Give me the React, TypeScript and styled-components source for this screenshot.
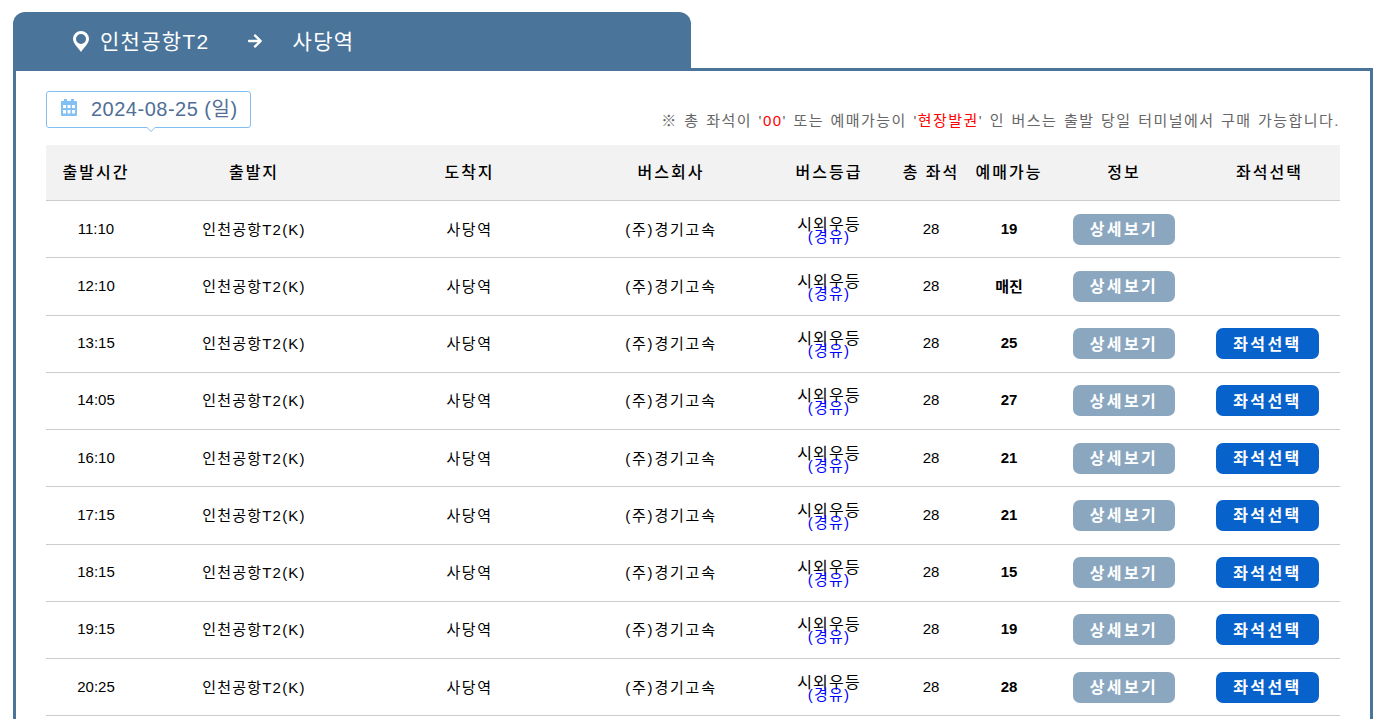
import styled, { createGlobalStyle } from "styled-components"
import { FaArrowRight } from "react-icons/fa"

const GlobalStyle = createGlobalStyle`
    html, body {
        margin: 0;
        padding: 0;
        height: 719px;
        overflow: hidden;
        background: #fff;
    }
    body {
        font-family: "Liberation Sans", "Noto Sans CJK KR", sans-serif;
        color: #000;
    }
`

const Page = styled.div`
    padding: 12px 14px 0 13px;
`

const RouteTab = styled.div`
    display: flex;
    align-items: center;
    width: 678px;
    height: 56px;
    box-sizing: border-box;
    padding: 2px 0 0 60px;
    background: #4b749a;
    border-radius: 12px 12px 0 0;
    color: #fff;
    font-size: 21px;
    svg {
        flex: none;
    }
`

const PlaceName = styled.span`
    margin: -2px 0 0 11px;
    letter-spacing: 1.3px;
`

const Arrow = styled(FaArrowRight)`
    margin: 0 19px 0 37px;
    font-size: 16px;
`

const Frame = styled.div`
    border: 3px solid #4b749a;
    padding: 20px 30px 40px 30px;
    background: #fff;
`

const TopRow = styled.div`
    display: flex;
    justify-content: space-between;
    align-items: flex-end;
    height: 54px;
`

const DateBox = styled.div`
    position: relative;
    display: flex;
    align-items: center;
    align-self: flex-start;
    width: 205px;
    height: 37px;
    box-sizing: border-box;
    padding: 0 0 5px 14px;
    border: 1px solid #82bff5;
    border-radius: 3px;
    color: #4f6f96;
    font-size: 20px;
    letter-spacing: 0.5px;
    &::before, &::after {
        content: "";
        position: absolute;
        left: 99px;
        border-left: 5px solid transparent;
        border-right: 5px solid transparent;
    }
    &::before {
        bottom: -5px;
        border-top: 5px solid #82bff5;
    }
    &::after {
        bottom: -4px;
        border-top: 5px solid #fff;
    }
`

const CalendarIcon = styled.svg`
    flex: none;
    width: 16px;
    height: 17px;
    margin-right: 14px;
    fill: #82bff5;
`

const Notice = styled.p`
    margin: 0 0 14px 0;
    font-size: 15px;
    line-height: 20px;
    letter-spacing: 1.45px;
    word-spacing: 1px;
    color: #666;
    white-space: nowrap;
`

const Red = styled.span`
    color: #f00;
`

const BusTable = styled.table`
    width: 1294px;
    border-collapse: separate;
    border-spacing: 0;
    table-layout: fixed;
`

const HeadCell = styled.th`
    height: 52px;
    padding: 0 0 3px 0;
    background: #f2f2f2;
    border-bottom: 1px solid #ccc;
    font-size: 16px;
    font-weight: 500;
    letter-spacing: 2px;
    text-align: center;
`

const Cell = styled.td<{ $strong?: boolean; $spacing?: number }>`
    height: 54.25px;
    padding: 0 0 2px 0;
    border-bottom: 1px solid #ccc;
    font-size: 15px;
    font-weight: ${(p) => (p.$strong ? 700 : 400)};
    letter-spacing: ${(p) => p.$spacing ?? 0}px;
    text-align: center;
`

const Grade = styled.div`
    margin-top: 4px;
    font-size: 16px;
    line-height: 16px;
    letter-spacing: 1.2px;
`

const Fuel = styled.div`
    font-size: 15px;
    line-height: 14px;
    margin-top: -3px;
    letter-spacing: 1.2px;
    color: #00f;
`

const ActionButton = styled.button<{ $primary?: boolean }>`
    width: ${(p) => (p.$primary ? "103px" : "102px")};
    height: 31px;
    margin: 2px ${(p) => (p.$primary ? "4px" : "0")} 0 0;
    padding: 0 0 2px 0;
    border: none;
    border-radius: 7px;
    background: ${(p) => (p.$primary ? "#0862cb" : "#8ba7bf")};
    color: #fff;
    font-family: inherit;
    font-size: 16px;
    font-weight: 700;
    letter-spacing: 2.4px;
    vertical-align: middle;
`

const columns = [100, 216, 215, 188, 128, 76, 80, 150, 141]
const headers = ["출발시간", "출발지", "도착지", "버스회사", "버스등급", "총 좌석", "예매가능", "정보", "좌석선택"]

const buses = [
    { time: "11:10", left: "19", canSelect: false },
    { time: "12:10", left: "매진", canSelect: false },
    { time: "13:15", left: "25", canSelect: true },
    { time: "14:05", left: "27", canSelect: true },
    { time: "16:10", left: "21", canSelect: true },
    { time: "17:15", left: "21", canSelect: true },
    { time: "18:15", left: "15", canSelect: true },
    { time: "19:15", left: "19", canSelect: true },
    { time: "20:25", left: "28", canSelect: true },
]

const PinIcon = () => (
    <svg width="16" height="21" viewBox="0 0 16 21" fill="#fff">
        <path
            fillRule="evenodd"
            d="M8 0a8 8 0 0 1 8 8c0 4.2-5 8.500-8 13-3-4.500-8-8.800-8-13a8 8 0 0 1 8-8zm0 3a5 5 0 1 0 0 10 5 5 0 0 0 0-10z"
        />
    </svg>
)

export default function App() {
    return (
        <Page>
            <GlobalStyle />
            <RouteTab>
                <PinIcon />
                <PlaceName>인천공항T2</PlaceName>
                <Arrow />
                <PlaceName>사당역</PlaceName>
            </RouteTab>
            <Frame>
                <TopRow>
                    <DateBox>
                        <CalendarIcon viewBox="0 0 16 17">
                            <path
                                fillRule="evenodd"
                                d="M3 0h3v2h4V0h3v2h2a1 1 0 0 1 1 1v13a1 1 0 0 1-1 1H1a1 1 0 0 1-1-1V3a1 1 0 0 1 1-1h2zM2 6v3h3V6zm4.500 0v3h3V6zM11 6v3h3V6zM2 11v3.500h3V11zm4.500 0v3.500h3V11zM11 11v3.500h3V11z"
                            />
                        </CalendarIcon>
                        2024-08-25 (일)
                    </DateBox>
                    <Notice>
                        ※ 총 좌석이 '<Red>00</Red>' 또는 예매가능이 '<Red>현장발권</Red>' 인 버스는 출발 당일 터미널에서 구매 가능합니다.
                    </Notice>
                </TopRow>
                <BusTable>
                    <colgroup>
                        {columns.map((w, i) => (
                            <col key={i} width={w} />
                        ))}
                    </colgroup>
                    <thead>
                        <tr>
                            {headers.map((h) => (
                                <HeadCell key={h}>{h}</HeadCell>
                            ))}
                        </tr>
                    </thead>
                    <tbody>
                        {buses.map((bus) => (
                            <tr key={bus.time}>
                                <Cell>{bus.time}</Cell>
                                <Cell $spacing={1.2}>인천공항T2(K)</Cell>
                                <Cell $spacing={1.6}>사당역</Cell>
                                <Cell $spacing={1.8}>(주)경기고속</Cell>
                                <Cell>
                                    <Grade>시외우등</Grade>
                                    <Fuel>(경유)</Fuel>
                                </Cell>
                                <Cell>28</Cell>
                                <Cell $strong>{bus.left}</Cell>
                                <Cell>
                                    <ActionButton>상세보기</ActionButton>
                                </Cell>
                                <Cell>{bus.canSelect && <ActionButton $primary>좌석선택</ActionButton>}</Cell>
                            </tr>
                        ))}
                    </tbody>
                </BusTable>
            </Frame>
        </Page>
    )
}
